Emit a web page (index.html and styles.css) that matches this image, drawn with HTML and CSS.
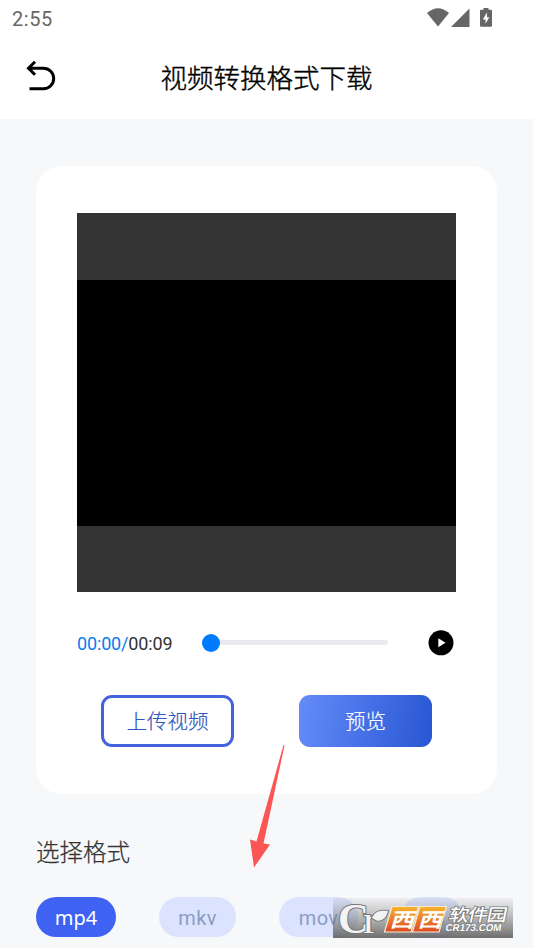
FILE: index.html
```html
<!DOCTYPE html>
<html lang="zh-CN">
<head>
<meta charset="utf-8">
<title>视频转换格式下载</title>
<link rel="stylesheet" href="styles.css">
</head>
<body>
<div class="status">
  <span class="clock">2:55</span>
  <svg class="status-icons" width="68" height="22" viewBox="0 0 68 22">
    <path d="M0 5 Q11-4.500 22 5L11 18.500Z"/>
    <path d="M24 19L42.500 0.500V19Z"/>
    <path fill-rule="evenodd" d="M56.500 0H61.500V1.700H64Q65 1.700 65 2.700V17.500Q65 18.700 64 18.700H54Q53 18.700 53 17.500V2.700Q53 1.700 54 1.700H56.500ZM60 4.500L55.800 11.500H58.500V15.800L62.300 9.300H60Z"/>
  </svg>
</div>
<header class="header">
  <svg class="back" width="32" height="34" viewBox="0 0 32 34"><path d="M10 2.800L3.500 9.300L10 15.800M3.500 9.300H18.500A10.200 10.200 0 0 1 18.500 29.700H4.500"/></svg>
  <h1>视频转换格式下载</h1>
</header>
<main>
  <section class="card">
    <div class="video"><div class="picture"></div></div>
    <div class="player">
      <div class="time"><span>00:00/</span>00:09</div>
      <div class="track"><i></i></div>
      <svg class="play" width="26" height="26" viewBox="0 0 26 26"><circle cx="13" cy="12.800" r="12.500"/><path d="M10.300 8.300L17.500 12.800L10.300 17.300Z"/></svg>
    </div>
    <div class="actions">
      <button class="upload">上传视频</button>
      <button class="preview">预览</button>
    </div>
  </section>
  <h2>选择格式</h2>
  <div class="formats">
    <span class="chip active">mp4</span>
    <span class="chip mkv">mkv</span>
    <span class="chip mov">mov</span>
    <span class="chip avi">avi</span>
  </div>
</main>
<svg class="arrow" width="40" height="126" viewBox="0 0 40 126"><path d="M34.500 0L35.500 .5L14.500 98.500L21 99.500L5 122.500L1 94.500L7.500 96.500Z"/></svg>
<svg class="mark" width="180" height="40" viewBox="0 0 180 40">
  <defs>
    <linearGradient id="haze" x2="0" y2="1"><stop offset="0" stop-color="#808080" stop-opacity=".08"/><stop offset=".4" stop-color="#777" stop-opacity=".42"/><stop offset="1" stop-color="#626262" stop-opacity=".92"/></linearGradient>
    <linearGradient id="orange" x2="0" y2="1"><stop offset="0" stop-color="#f8b42b"/><stop offset="1" stop-color="#dd4a21"/></linearGradient>
  </defs>
  <rect width="180" height="40" fill="url(#haze)"/>
  <g class="symbol">
    <text class="c" transform="translate(5 34.500)">C</text>
    <text class="r" transform="matrix(1.150 0 0 1 30 34.500)">r</text>
    <path d="M39 20C42 13 48 12 55 13C53 22 46 25 41 21Z"/>
  </g>
  <g class="tiles">
    <path d="M59 8.500H85.500L78 34H51.500Z"/><path d="M87 8.500H113.500L106 34H79.500Z"/>
  </g>
  <g class="glyphs"><text transform="matrix(1.1 0 -.27 .9 56.500 29.300)">西</text><text transform="matrix(1.1 0 -.27 .9 84.500 29.300)">西</text></g>
  <text class="name" transform="matrix(1 0 -.18 .86 115 23)" textLength="58">软件园</text>
  <text class="site" transform="matrix(1 0 -.18 1 112 33.300)" textLength="56" lengthAdjust="spacingAndGlyphs">CR173.COM</text>
</svg>
</body>
</html>
```

FILE: styles.css
```css
* { box-sizing: border-box; }
body {
  margin: 0;
  height: 948px;
  overflow: hidden;
  position: relative;
  background: #f7f8fa;
  font-family: "Noto Sans", "Noto Sans CJK SC", sans-serif;
}
.status {
  height: 38px;
  background: #fff;
  display: flex;
  justify-content: space-between;
  padding: 8px 38px 0 12px;
}
.clock { font: 400 20px/22px Roboto, sans-serif; color: #666; letter-spacing: .6px; }
.status-icons { fill: #666; }
.header {
  height: 81px;
  background: #fff;
  display: grid;
  grid-template-columns: 32px 1fr 32px;
  padding: 0 25px;
  align-items: center;
}
.back { fill: none; stroke: #000; stroke-width: 3; margin-bottom: 6px; }
h1 { margin: 0 0 4px; font: 300 26.500px/38px "Noto Sans CJK SC", sans-serif; text-align: center; color: #000; -webkit-text-stroke: .4px; }
main { padding: 47px 36px 0; }
.card { height: 628px; width: 461px; border-radius: 26px; background: #fff; padding: 47px 41px; }
.video { height: 379px; background: #333; padding-top: 67px; }
.picture { height: 246px; background: #000; }
.player { height: 26px; margin-top: 38px; display: flex; align-items: center; }
.time { width: 125px; font: 400 18px/24px Roboto, sans-serif; color: #333; padding-top: 2px; letter-spacing: -.15px; }
.time span { color: #087bf0; }
.track { width: 186px; height: 5px; border-radius: 3px; background: #e9e9ef; display: flex; align-items: center; margin-bottom: 1px; }
.track i { width: 18px; height: 18px; border-radius: 50%; background: #007aff; }
.play { margin-left: 40px; }
.play path { fill: #fff; }
.actions { display: flex; gap: 65px; padding: 39px 24px 0; }
button { width: 133px; height: 51.500px; border: 0; border-radius: 11px; padding: 0 0 2px; font: 300 20.500px/44px "Noto Sans CJK SC", sans-serif; -webkit-text-stroke: .2px; }
.upload { border: 3px solid #4362dc; background: #fff; color: #3155bd; }
.preview { background: linear-gradient(100deg, #648bf9, #2856d3); color: #fff; }
h2 { margin: 38.500px 0 28px; font: 300 23.500px/36px "Noto Sans CJK SC", sans-serif; color: #333; -webkit-text-stroke: .25px; }
.formats { display: flex; gap: 43px; }
.chip { height: 40px; width: 77px; flex: none; border-radius: 20px; font: 400 20px/42px Roboto, sans-serif; text-align: center; background: #dbe3fe; color: #8c9cc2; letter-spacing: .3px; }
.active { width: 80px; background: #4062f2; color: #fff; font-family: "Noto Sans", sans-serif; line-height: 41px; letter-spacing: 0; }
.mov { width: 79px; }
.avi { width: 62px; }
.arrow { position: absolute; left: 249px; top: 745px; fill: #fb5654; }
.mark { position: absolute; left: 333px; top: 898px; overflow: visible; }
.symbol { font-family: "Liberation Serif", serif; fill: #f3f3f3; stroke: #777; stroke-width: 2; paint-order: stroke; stroke-linejoin: round; }
.c { font-size: 43px; font-weight: 700; }
.r { font-size: 39px; }
.tiles { fill: url(#orange); stroke: #f7e9d7; stroke-width: 1.200; }
.glyphs { font: 700 22px "Noto Sans CJK SC", sans-serif; fill: #fff; }
.name { font: 500 20px "Noto Sans CJK SC", sans-serif; fill: #fff; stroke: #777; stroke-width: 1.800; paint-order: stroke; }
.site { font: 700 10px "Liberation Sans", sans-serif; fill: #fff; stroke: #777; stroke-width: 1; paint-order: stroke; }
```
